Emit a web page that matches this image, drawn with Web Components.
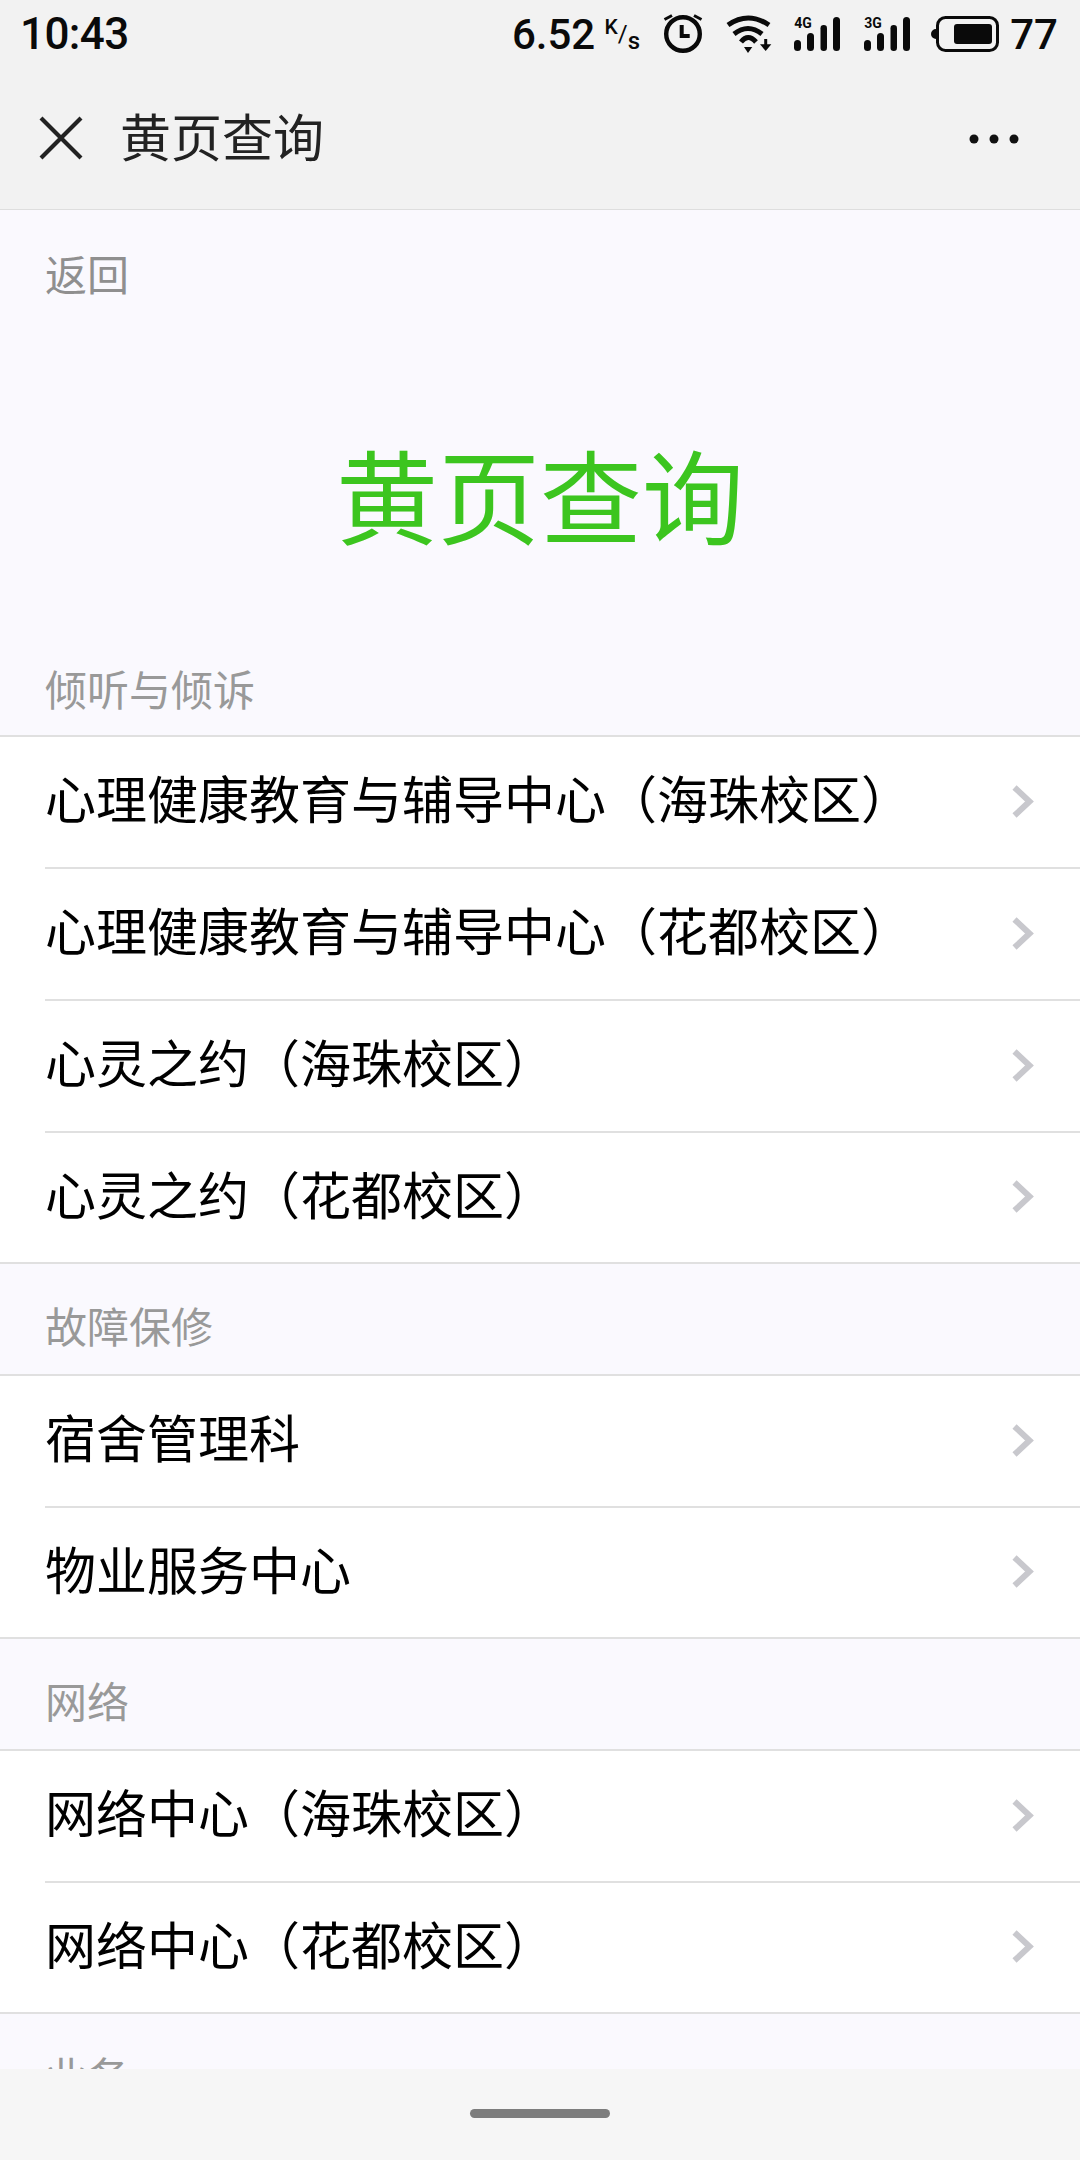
<!DOCTYPE html>
<html lang="zh-CN">
<head>
<meta charset="utf-8">
<title>黄页查询</title>
<style>
	html, body {
		margin: 0;
		padding: 0;
		background: #faf9fe;
		font-family: "Noto Sans CJK SC", Roboto, sans-serif;
	}
</style>
</head>
<body>
<app-shell>
	<status-bar></status-bar>
	<nav-bar title="黄页查询"></nav-bar>
	<back-link>返回</back-link>
	<page-title>黄页查询</page-title>

	<group-head first>倾听与倾诉</group-head>
	<list-group>
		<list-item>心理健康教育与辅导中心（海珠校区）</list-item>
		<list-item>心理健康教育与辅导中心（花都校区）</list-item>
		<list-item>心灵之约（海珠校区）</list-item>
		<list-item>心灵之约（花都校区）</list-item>
	</list-group>

	<group-head>故障保修</group-head>
	<list-group>
		<list-item>宿舍管理科</list-item>
		<list-item>物业服务中心</list-item>
	</list-group>

	<group-head>网络</group-head>
	<list-group>
		<list-item>网络中心（海珠校区）</list-item>
		<list-item>网络中心（花都校区）</list-item>
	</list-group>

	<group-head>业务</group-head>
	<home-bar></home-bar>
</app-shell>

<script>
const FONT = `"Noto Sans CJK SC", Roboto, sans-serif`

class AppShell extends HTMLElement {
	constructor() {
		super()
		this.attachShadow({ mode: 'open' }).innerHTML = `
			<style>
				:host {
					display: block;
					position: relative;
					width: 1080px;
					height: 2160px;
					overflow: hidden;
					background: #faf9fe;
				}
			</style>
			<slot></slot>
		`
	}
}

class StatusBar extends HTMLElement {
	constructor() {
		super()
		this.attachShadow({ mode: 'open' }).innerHTML = `
			<style>
				:host {
					display: flex;
					align-items: center;
					height: 68px;
					padding: 0 22px 0 20px;
					background: #f2f2f2;
					color: #0a0a0a;
					font-family: Roboto, sans-serif;
					font-weight: 500;
					font-size: 42px;
				}
				.time { flex: 1; font-size: 44px; letter-spacing: -0.6px; }
				.unit {
					display: flex;
					justify-content: center;
					width: 36px;
					height: 34px;
					margin: 0 23px 0 9px;
					font-size: 21px;
					line-height: 20px;
				}
				.unit .k { align-self: flex-start; }
				.unit .slash { align-self: center; font-weight: 400; font-size: 24px; }
				.unit .s { align-self: flex-end; font-size: 24px; }
				svg { display: block; flex: none; }
				.alarm { margin-right: 23px; }
				.wifi { margin-right: 22px; }
				.sig { margin-right: 24px; }
				.sig.last { margin-right: 21px; }
				.batt { margin-right: 11px; }
			</style>
			<span class="time">10:43</span>
			<span class="speed">6.52</span>
			<span class="unit"><span class="k">K</span><span class="slash">/</span><span class="s">s</span></span>
			<svg class="alarm" width="40" height="40" viewBox="0 0 40 40" fill="none" stroke="#0a0a0a">
				<circle cx="20" cy="20" r="16.800" stroke-width="4.400"/>
				<path d="M18.700 11v11h8" stroke-width="4"/>
				<path d="M1.500 5.500L9 1.500M38.500 5.500L31 1.500" stroke-width="3"/>
			</svg>
			<svg class="wifi" width="46" height="40" viewBox="0 0 46 40" fill="none" stroke="#0a0a0a" stroke-width="5">
				<path d="M2 11Q22 -3 43 11"/>
				<path d="M8 20Q22 9 36 20"/>
				<path d="M15 28Q22 19 30 28"/>
				<path d="M18 33h8.300L22 39z" fill="#0a0a0a" stroke="none"/>
				<path d="M39.700 25v6" stroke-width="3"/>
				<path d="M34 30.300h11.300L39.700 37z" fill="#0a0a0a" stroke="none"/>
			</svg>
			<signal-icon class="sig" label="4G"></signal-icon>
			<signal-icon class="sig last" label="3G"></signal-icon>
			<svg class="batt" width="68" height="36" viewBox="0 0 68 36" fill="none">
				<path d="M5 13a5 5 0 0 0 0 10z" fill="#0a0a0a"/>
				<rect x="6.500" y="1.500" width="60" height="33" rx="8" stroke="#0a0a0a" stroke-width="3"/>
				<rect x="23" y="8" width="38" height="20" rx="3" fill="#0a0a0a"/>
			</svg>
			<span class="pct">77</span>
		`
	}
}

class SignalIcon extends HTMLElement {
	constructor() {
		super()
		this.attachShadow({ mode: 'open' }).innerHTML = `
			<style>
				:host {
					display: block;
					position: relative;
					width: 46px;
					height: 34px;
					flex: none;
				}
				span {
					position: absolute;
					left: 0;
					top: 0;
					font: 700 14px/12px Roboto, sans-serif;
					color: #0a0a0a;
				}
				svg { display: block; }
			</style>
			<svg width="46" height="34" viewBox="0 0 46 34" fill="#0a0a0a">
				<rect x="0" y="23" width="7" height="11" rx="3.500"/>
				<rect x="13" y="16" width="7" height="18" rx="3.500"/>
				<rect x="26.500" y="8" width="6.500" height="26" rx="3.200"/>
				<rect x="39" y="0" width="7" height="34" rx="3.500"/>
			</svg>
			<span>${this.getAttribute('label')}</span>
		`
	}
}

class NavBar extends HTMLElement {
	constructor() {
		super()
		this.attachShadow({ mode: 'open' }).innerHTML = `
			<style>
				:host {
					display: flex;
					align-items: center;
					box-sizing: border-box;
					height: 142px;
					padding: 0 60px 2px 39px;
					background: #f2f2f2;
					border-bottom: 1px solid #dedede;
					color: #222222;
				}
				.title {
					flex: 1;
					margin: 0 0 6px 37px;
					font: 400 51px/60px ${FONT};
				}
				.more { margin-top: 2px; }
				svg { display: block; }
			</style>
			<svg class="close" width="44" height="44" viewBox="0 0 44 44" stroke="#222222" stroke-width="4.200" fill="none">
				<path d="M2 2l40 40M42 2L2 42"/>
			</svg>
			<span class="title">${this.getAttribute('title')}</span>
			<svg class="more" width="52" height="12" viewBox="0 0 52 12" fill="#111111">
				<circle cx="6" cy="6" r="4.500"/><circle cx="26" cy="6" r="4.500"/><circle cx="46" cy="6" r="4.500"/>
			</svg>
		`
	}
}

class BackLink extends HTMLElement {
	constructor() {
		super()
		this.attachShadow({ mode: 'open' }).innerHTML = `
			<style>
				:host {
					display: block;
					padding: 32px 45px 2px;
					font: 400 42px/62px ${FONT};
					color: #8f8f8f;
				}
			</style>
			<slot></slot>
		`
	}
}

class PageTitle extends HTMLElement {
	constructor() {
		super()
		this.attachShadow({ mode: 'open' }).innerHTML = `
			<style>
				:host {
					display: block;
					margin-top: 127px;
					text-align: center;
					font: 400 102px/120px ${FONT};
					color: #3cc51f;
				}
			</style>
			<slot></slot>
		`
	}
}

class GroupHead extends HTMLElement {
	constructor() {
		super()
		this.attachShadow({ mode: 'open' }).innerHTML = `
			<style>
				:host {
					display: block;
					padding: 30px 45px 18px;
					font: 400 42px/62px ${FONT};
					color: #999999;
				}
				:host([first]) { padding-top: 104px; padding-bottom: 16px; }
			</style>
			<slot></slot>
		`
	}
}

class ListGroup extends HTMLElement {
	constructor() {
		super()
		this.attachShadow({ mode: 'open' }).innerHTML = `
			<style>
				:host {
					display: block;
					background: #ffffff;
					border-top: 2px solid #e0e0e0;
					border-bottom: 2px solid #e0e0e0;
				}
			</style>
			<slot></slot>
		`
	}
}

class ListItem extends HTMLElement {
	constructor() {
		super()
		this.attachShadow({ mode: 'open' }).innerHTML = `
			<style>
				:host {
					display: block;
					margin-left: 45px;
					border-top: 2px solid #e0e0e0;
				}
				:host(:first-child) { border-top: 0; }
				:host(:last-child) .row { height: 129px; }
				.row {
					display: flex;
					align-items: center;
					justify-content: space-between;
					height: 130px;
					padding-right: 46px;
					font: 400 51px/60px ${FONT};
					color: #000000;
				}
				.text { margin-bottom: 10px; }
				svg { display: block; flex: none; margin-bottom: 2px; }
			</style>
			<div class="row">
				<span class="text"><slot></slot></span>
				<svg width="22" height="33" viewBox="0 0 22 33" fill="none" stroke="#c8c8cd" stroke-width="6">
					<path d="M2.500 2.500L17.500 16.500L2.500 30.500"/>
				</svg>
			</div>
		`
	}
}

class HomeBar extends HTMLElement {
	constructor() {
		super()
		this.attachShadow({ mode: 'open' }).innerHTML = `
			<style>
				:host {
					display: flex;
					align-items: center;
					justify-content: center;
					position: absolute;
					left: 0;
					right: 0;
					bottom: 0;
					height: 91px;
					background: #f6f6f6;
				}
				div {
					width: 140px;
					height: 9px;
					margin-bottom: 3px;
					border-radius: 5px;
					background: #7d7d7d;
				}
			</style>
			<div></div>
		`
	}
}

customElements.define('app-shell', AppShell)
customElements.define('status-bar', StatusBar)
customElements.define('signal-icon', SignalIcon)
customElements.define('nav-bar', NavBar)
customElements.define('back-link', BackLink)
customElements.define('page-title', PageTitle)
customElements.define('group-head', GroupHead)
customElements.define('list-group', ListGroup)
customElements.define('list-item', ListItem)
customElements.define('home-bar', HomeBar)
</script>
</body>
</html>
